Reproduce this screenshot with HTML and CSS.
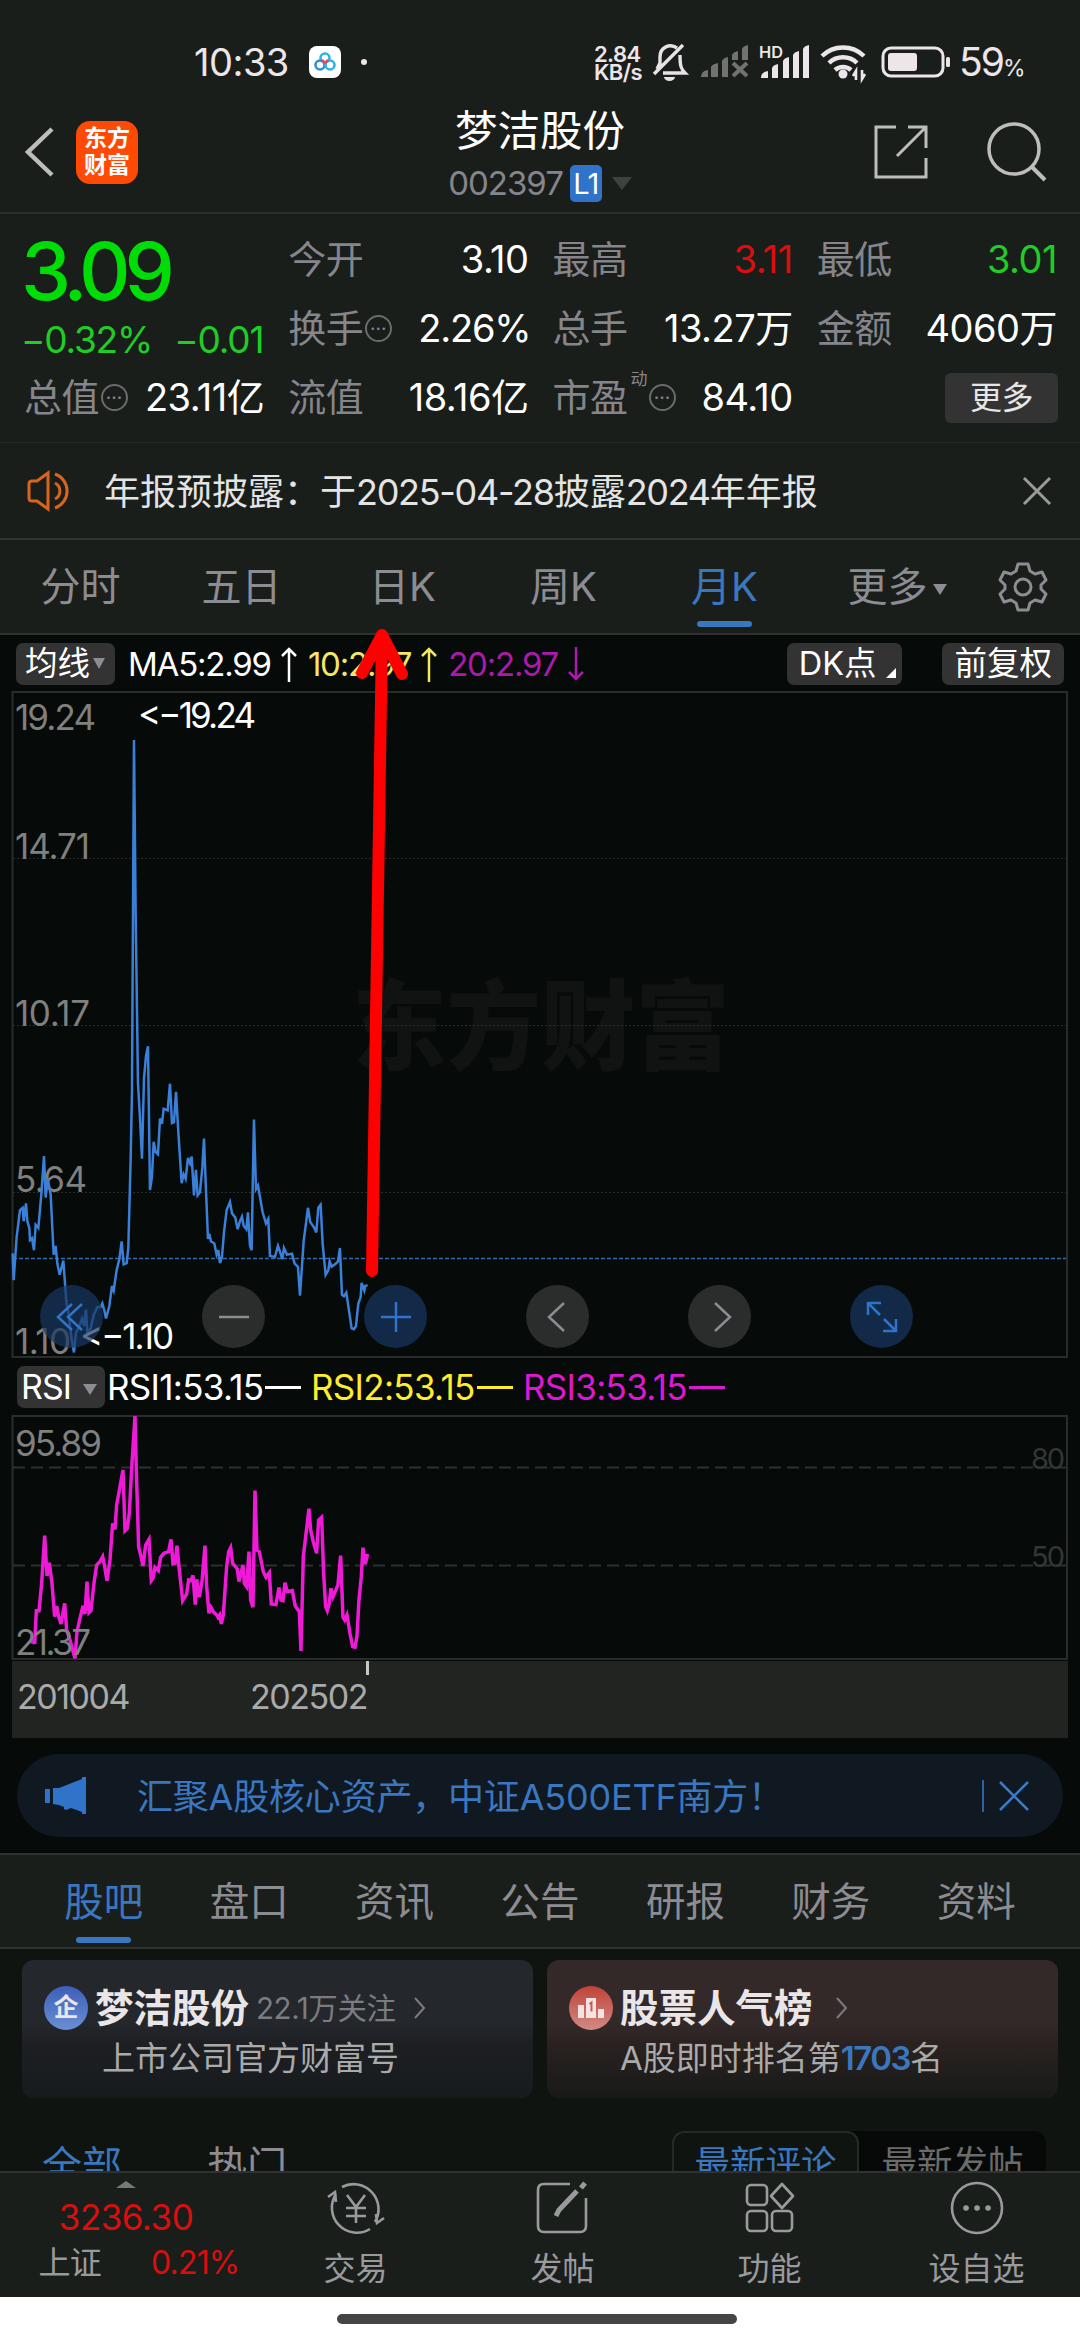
FILE: index.html
```html
<!DOCTYPE html>
<html lang="zh-CN">
<head>
    <meta charset="UTF-8">
    <meta name="viewport" content="width=device-width, initial-scale=1.0">
    <title>梦洁股份 002397</title>
    <link rel="stylesheet" href="styles.css">
</head>
<body>
    <div class="status-bar">
        <span class="time">10:33</span>
        <svg class="cloud-app" width="32" height="32" viewBox="0 0 32 32">
            <rect width="32" height="32" rx="8" fill="#fff"/>
            <g fill="none" stroke-width="2.6">
                <circle cx="16" cy="12" r="4.5" stroke="#2ab4e8"/>
                <circle cx="11" cy="19" r="4.5" stroke="#2b8ee0"/>
                <circle cx="21" cy="19" r="4.5" stroke="#2ab4e8"/>
                <path d="M13 14l3 3 3-3" stroke="#e8476a"/>
            </g>
        </svg>
        <span class="dot"></span>
        <div class="net-speed">2.84<br>KB/s</div>
        <svg class="bell" width="36" height="38" viewBox="0 0 36 38" fill="none" stroke="#e8e2e6" stroke-width="3.4">
            <path d="M25 5C18 0 8 4 8 14v6l-3 6M11 30h22c-4-4-5-7-5-18M31 2L2 31"/>
            <path d="M12 34h11a5.500 4 0 0 1-11 0z" fill="#e8e2e6" stroke="none"/>
        </svg>
        <svg class="signal-off" width="48" height="34" viewBox="0 0 48 34" fill="#71736f">
            <path d="M0 32q0-6 7-7v7zM10 22q1-3 7-4v14h-7zM21 16q1-3 6-4v20h-6zM31 10q1-3 6-4v9h-6zM41 4q1-3 6-4v15h-6z"/>
            <path d="M32 18l14 13M46 18L32 31" stroke="#71736f" stroke-width="4"/>
        </svg>
        <svg class="signal-hd" width="52" height="36" viewBox="0 0 52 36" fill="#ece6ea">
            <text class="hd" x="0" y="14" textLength="24" lengthAdjust="spacingAndGlyphs">HD</text>
            <path d="M2 34q0-6 7-7v7zM13 24q1-3 6-4v14h-6zM24 17q1-3 6-4v21h-6zM34 11q1-3 6-4v27h-6zM44 5q1-3 6-4v33h-6z"/>
        </svg>
        <svg class="wifi" width="47" height="36" viewBox="0 0 47 36" fill="none" stroke="#ece6ea" stroke-width="4.5">
            <path d="M2 12a30 30 0 0 1 42 0M9 19a20 20 0 0 1 28 0M15 26a12 12 0 0 1 16 0"/>
            <circle cx="23" cy="30" r="4.500" fill="#ece6ea" stroke="none"/>
            <path d="M36 36v-9l-3 5M42 26v9l3-5" stroke-width="2.600"/>
        </svg>
        <svg class="battery" width="70" height="32" viewBox="0 0 70 32">
            <rect x="2" y="2" width="60" height="28" rx="8" fill="none" stroke="#ece6ea" stroke-width="3"/>
            <rect x="7" y="7" width="29" height="18" rx="3" fill="#ece6ea"/>
            <rect x="65" y="11" width="4" height="10" rx="1.500" fill="#ece6ea"/>
        </svg>
        <span class="percent">59<small>%</small></span>
    </div>

    <div class="header">
        <div class="header-left">
            <svg width="28" height="50" viewBox="0 0 28 50" fill="none" stroke="#bdbdbd" stroke-width="4.500">
                <path d="M27 2L3 25l24 23"/>
            </svg>
            <div class="app-logo">东方<br>财富</div>
        </div>
        <div class="header-title">
            <div class="stock-name">梦洁股份</div>
            <div class="stock-code">002397<span class="level">L1</span><i class="tri"></i></div>
        </div>
        <div class="header-right">
            <svg width="54" height="54" viewBox="0 0 54 54" fill="none" stroke="#bdbdbd" stroke-width="3">
                <path d="M22 2H2v50h50V33M34 2h18v21M52 2L23 31"/>
            </svg>
            <svg width="60" height="60" viewBox="0 0 60 60" fill="none" stroke="#bdbdbd" stroke-width="3.500">
                <circle cx="27" cy="27" r="25"/>
                <path d="M45 45l13 13" stroke-width="4"/>
            </svg>
        </div>
    </div>

    <div class="quote">
        <div class="price-box">
            <div class="price">3.09</div>
            <div class="change"><span>−0.32%</span><span>−0.01</span></div>
        </div>
        <div class="cell"><label>今开</label><b>3.10</b></div>
        <div class="cell"><label>最高</label><b class="up">3.11</b></div>
        <div class="cell"><label>最低</label><b class="down">3.01</b></div>
        <div class="cell"><label>换手</label><i class="info">•••</i><b class="tight">2.26%</b></div>
        <div class="cell"><label>总手</label><b>13.27万</b></div>
        <div class="cell"><label>金额</label><b>4060万</b></div>
        <div class="cell"><label>总值</label><i class="info">•••</i><b>23.11亿</b></div>
        <div class="cell"><label>流值</label><b>18.16亿</b></div>
        <div class="cell"><label>市盈</label><sup>动</sup><i class="info">•••</i><b>84.10</b></div>
        <div class="cell"><span class="more-btn">更多</span></div>
    </div>

    <div class="notice">
        <svg width="48" height="42" viewBox="0 0 48 42" fill="none" stroke="#d9641c" stroke-width="3">
            <path d="M21 3v36L10 31H5q-3 0-3-3V14q0-3 3-3h5zM28 13a9 9 0 0 1 0 16M28 4a18 18 0 0 1 0 34"/>
        </svg>
        <span class="notice-text">年报预披露：于<em>2025-04-28</em>披露<em>2024</em>年年报</span>
        <svg width="28" height="28" viewBox="0 0 28 28" stroke="#9a9a9a" stroke-width="3">
            <path d="M1 1l26 26M27 1L1 27"/>
        </svg>
    </div>

    <div class="period-tabs">
        <span>分时</span>
        <span>五日</span>
        <span>日K</span>
        <span>周K</span>
        <span class="active">月K</span>
        <span class="more">更多<i class="tri"></i></span>
        <svg width="50" height="50" viewBox="0 0 50 50" fill="none" stroke="#8c8c92" stroke-width="3" stroke-linejoin="round">
            <path d="M20 2h10l2 7 5 3 7-2 4 8-5 5v4l5 5-4 8-7-2-5 3-2 7H20l-2-7-5-3-7 2-4-8 5-5v-4l-5-5 4-8 7 2 5-3z"/>
            <circle cx="25" cy="25" r="8"/>
        </svg>
    </div>

    <div class="ma-bar">
        <span class="chip ma-chip">均线<i class="tri"></i></span>
        <span class="ma5">MA5:2.99</span><svg class="arrow" width="18" height="36" viewBox="0 0 18 36" fill="none" stroke="#fff" stroke-width="2.5"><path d="M9 36V3M2 10l7-7 7 7"/></svg>
        <span class="ma10">10:2.97</span><svg class="arrow" width="18" height="36" viewBox="0 0 18 36" fill="none" stroke="#f5e663" stroke-width="2.5"><path d="M9 36V3M2 10l7-7 7 7"/></svg>
        <span class="ma20">20:2.97</span><svg class="arrow" width="18" height="36" viewBox="0 0 18 36" fill="none" stroke="#ab1aab" stroke-width="2.5"><path d="M9 1v32M2 26l7 7 7-7"/></svg>
        <span class="chip dk-chip">DK点<i class="corner"></i></span>
        <span class="chip">前复权</span>
    </div>

    <div class="chart">
        <svg width="1080" height="668" viewBox="0 0 1080 668">
            <text class="watermark" x="352" y="372" textLength="378" lengthAdjust="spacingAndGlyphs">东方财富</text>
            <rect x="12.5" y="2" width="1054.5" height="665" fill="none" stroke="#2a2c2b" stroke-width="2"/>
            <g stroke="#2b2d2c" stroke-dasharray="2 2">
                <path d="M13 168.5h1053M13 335.5h1053M13 502.5h1053"/>
            </g>
            <g class="axis">
                <text x="15" y="40" textLength="81">19.24</text>
                <text x="15" y="169" textLength="75">14.71</text>
                <text x="15" y="336" textLength="75">10.17</text>
                <text x="15" y="502" textLength="72">5.64</text>
                <text x="15" y="664" textLength="56">1.10</text>
            </g>
            <path d="M13 568.5h1053" stroke="#2f6bae" stroke-width="1.5" stroke-dasharray="4 2"/>
            <g transform="scale(.3333 .4464)">
                <polyline class="price-line" points="38,1262 41,1322 50,1225 60,1165 68,1160 71,1190 78,1150 82,1190 88,1205 90,1232 96,1228 102,1255 107,1198 115,1205 124,1130 132,1044 137,1137 143,1095 152,1130 161,1265 167,1245 172,1285 179,1310 190,1278 199,1370 206,1400 214,1450 222,1484 228,1440 238,1425 246,1408 252,1425 258,1388 262,1440 272,1430 281,1400 292,1382 302,1382 307,1374 313,1390 318,1408 328,1380 336,1335 341,1345 350,1300 358,1275 365,1235 371,1287 380,1284 385,1250 392,1050 396,900 402,112 407,500 414,880 420,960 426,1050 432,870 438,820 444,798 450,1120 456,1090 461,1012 467,1035 474,1040 480,960 486,972 491,938 503,942 510,882 516,970 522,968 528,900 535,990 545,1105 551,1085 557,1095 564,1048 570,1060 575,1045 582,1132 588,1075 593,1132 600,1125 607,1070 612,1005 618,1120 624,1230 628,1218 633,1235 643,1240 650,1265 655,1255 660,1284 666,1270 672,1215 680,1165 690,1147 696,1172 706,1182 713,1208 720,1190 726,1180 731,1200 739,1208 744,1170 750,1245 755,1255 758,1120 762,962 768,1118 774,1110 788,1170 798,1195 805,1185 810,1268 825,1270 834,1245 840,1258 847,1275 852,1250 861,1265 876,1263 884,1285 894,1292 900,1357 911,1235 918,1195 924,1160 931,1192 943,1205 949,1215 955,1160 962,1153 968,1240 977,1310 985,1300 989,1280 995,1292 1008,1285 1014,1280 1020,1250 1026,1355 1032,1358 1039,1350 1055,1430 1062,1432 1068,1425 1075,1375 1082,1360 1085,1328 1093,1345 1096,1335 1103,1333"/>
            </g>
            <g class="peak">
                <text x="138" y="38" textLength="118">&lt;−19.24</text>
                <text x="80" y="659" textLength="94">&lt;−1.10</text>
            </g>
        </svg>
        <div class="chart-tools">
            <span class="tool blue"><svg width="30" height="30" viewBox="0 0 30 30"><path d="M15 2L1 15l14 13M25 2L11 15l14 13"/></svg></span>
            <span class="tool"><svg width="32" height="32" viewBox="0 0 32 32"><path d="M1 16h30"/></svg></span>
            <span class="tool blue"><svg width="32" height="32" viewBox="0 0 32 32"><path d="M1 16h30M16 1v30"/></svg></span>
            <span class="tool"><svg width="30" height="30" viewBox="0 0 30 30"><path d="M21 1L6 15l15 14"/></svg></span>
            <span class="tool"><svg width="30" height="30" viewBox="0 0 30 30"><path d="M10 1l15 14-15 14"/></svg></span>
            <span class="tool blue"><svg width="34" height="34" viewBox="0 0 34 34"><path d="M3 15V3h13M3 3l12 12M31 19v12H18M31 31L19 19"/></svg></span>
        </div>
    </div>

    <div class="rsi-bar">
        <span class="chip rsi-chip">RSI<i class="tri"></i></span>
        <span class="rsi rsi1">RSI1:53.15<i></i></span>
        <span class="rsi rsi2">RSI2:53.15<i></i></span>
        <span class="rsi rsi3">RSI3:53.15<i></i></span>
    </div>

    <svg class="rsi-chart" width="1080" height="246" viewBox="0 0 1080 246">
        <rect x="12.5" y="1" width="1054.5" height="243" fill="none" stroke="#2a2d2b" stroke-width="2"/>
        <path d="M13 52.5h1053M13 150.5h1053" stroke="#2d302e" stroke-width="2" stroke-dasharray="12 6"/>
        <g class="level-text">
            <text x="1031" y="54" textLength="34">80</text>
            <text x="1031" y="152" textLength="34">50</text>
        </g>
        <g transform="translate(0 -45) scale(.3333)">
            <polyline class="rsi-line" points="93,820 97,802 104,822 109,722 117,722 125,640 134,497 141,618 148,578 156,640 164,740 170,708 176,740 183,762 194,700 200,780 210,810 218,840 225,865 231,785 240,745 249,708 255,732 261,635 267,728 273,722 282,640 290,585 300,575 308,560 314,590 321,632 330,570 338,460 345,478 350,405 360,350 369,300 375,482 382,475 388,430 396,280 405,138 409,300 416,530 422,555 429,588 437,525 447,508 454,632 459,625 465,592 475,602 482,562 492,550 506,545 513,508 519,582 525,580 531,527 537,590 548,692 560,672 566,630 573,632 579,616 586,704 590,628 598,682 606,635 615,527 620,650 627,730 633,712 640,725 650,735 654,742 659,735 664,762 670,735 680,590 686,545 692,533 698,580 712,597 717,635 729,585 733,640 740,650 747,545 752,690 759,712 765,362 771,540 778,545 790,605 798,622 808,608 814,702 828,704 837,653 843,690 849,692 855,638 862,665 877,662 886,708 898,725 903,843 910,560 916,510 927,416 932,480 941,520 950,550 956,450 965,442 971,610 977,710 982,722 988,700 993,655 999,680 1014,645 1022,557 1029,742 1034,750 1041,735 1050,790 1058,830 1065,832 1071,800 1077,690 1084,620 1089,533 1096,582 1103,552"/>
        </g>
        <g class="axis">
            <text x="15" y="41" textLength="87">95.89</text>
            <text x="15" y="240" textLength="76">21.37</text>
        </g>
    </svg>

    <div class="dates"><span>201004</span><span class="last">202502</span></div>

    <div class="banner">
        <svg width="42" height="38" viewBox="0 0 42 38" fill="#2f74c8">
            <path d="M0 12h5v14H0zM8 11h6L37 2V0h4v37h-4v-2l-11-4-5 2-2-1v-2l-5-2-6-1z"/>
        </svg>
        <span class="banner-text">汇聚A股核心资产，中证A500ETF南方！</span>
        <svg class="banner-close" width="48" height="34" viewBox="0 0 48 34" stroke="#3a7bc8" fill="none">
            <path d="M1 1v32" stroke-width="1.5"/>
            <path d="M18 3l28 28M46 3L18 31" stroke-width="2.5"/>
        </svg>
    </div>

    <div class="sub-tabs">
        <span class="active">股吧</span>
        <span>盘口</span>
        <span>资讯</span>
        <span>公告</span>
        <span>研报</span>
        <span>财务</span>
        <span>资料</span>
    </div>

    <div class="content">
        <div class="cards">
            <div class="card card-blue">
                <div class="card-title">
                    <span class="badge">企</span>
                    <strong>梦洁股份</strong>
                    <small>22.1万关注</small>
                    <svg width="12" height="22" viewBox="0 0 12 22"><path d="M1 1l9 10-9 10"/></svg>
                </div>
                <div class="card-sub">上市公司官方财富号</div>
            </div>
            <div class="card card-red">
                <div class="card-title">
                    <svg class="rank" width="44" height="44" viewBox="0 0 44 44">
                        <circle cx="22" cy="22" r="22" fill="url(#rankRed)"/>
                        <path d="M9 19h6v13H9zM17 12h10v20H17zM29 23h6v9h-6z" fill="#f3e3e1"/>
                        <path d="M20.500 18l2-1.500v9" fill="none" stroke="#c95a52" stroke-width="2"/>
                        <defs>
                            <linearGradient id="rankRed" x1="0" y1="0" x2="0" y2="1">
                                <stop offset="0" stop-color="#c04338"/>
                                <stop offset="1" stop-color="#d08a85"/>
                            </linearGradient>
                        </defs>
                    </svg>
                    <strong>股票人气榜</strong>
                    <svg class="go" width="12" height="22" viewBox="0 0 12 22"><path d="M1 1l9 10-9 10"/></svg>
                </div>
                <div class="card-sub">A股即时排名第<b>1703</b>名</div>
            </div>
        </div>
        <div class="feed-tabs">
            <span class="feed active">全部</span>
            <span class="feed">热门</span>
            <div class="sort">
                <span class="on">最新评论</span>
                <span>最新发帖</span>
            </div>
        </div>
    </div>

    <div class="bottom-bar">
        <div class="index">
            <i class="tri-up"></i>
            <div class="index-value">3236.30</div>
            <div class="index-row"><span>上证</span><b>0.21%</b></div>
        </div>
        <div class="nav">
            <svg width="62" height="56" viewBox="0 0 62 56">
                <path d="M17 7a25 25 0 0 1 33 35M45 49A25 25 0 0 1 11 14M3 17l7-5 1 10M59 38l-7 5-1-9"/>
                <path d="M22 15l9 12 9-12M31 27v16M21 28h20M21 36h20"/>
            </svg>
            <span>交易</span>
        </div>
        <div class="nav">
            <svg width="62" height="56" viewBox="0 0 62 56">
                <path d="M38 4H12q-6 0-6 6v36q0 6 6 6h36q6 0 6-6V18"/>
                <path d="M24 36l3-6 18-19" stroke-width="5"/>
                <path d="M49 8l4-5" stroke-width="5"/>
            </svg>
            <span>发帖</span>
        </div>
        <div class="nav">
            <svg width="62" height="56" viewBox="0 0 62 56">
                <rect x="8" y="5" width="20" height="20" rx="4"/>
                <rect x="8" y="31" width="20" height="20" rx="4"/>
                <rect x="33" y="31" width="20" height="20" rx="4"/>
                <path d="M43 4l11 12-11 12-11-12z" stroke-linejoin="round"/>
            </svg>
            <span>功能</span>
        </div>
        <div class="nav">
            <svg width="62" height="56" viewBox="0 0 62 56">
                <circle cx="31" cy="28" r="25"/>
                <path d="M20 28h.1M31 28h.1M42 28h.1" stroke-width="5.500" stroke-linecap="round"/>
            </svg>
            <span>设自选</span>
        </div>
    </div>

    <div class="home-bar"><i></i></div>

    <!-- hand-drawn pointer over the chart -->
    <svg class="pointer" width="70" height="670" viewBox="0 0 70 670">
        <path d="M22 651L32 15M12 53l20-38 20 39"/>
    </svg>
</body>
</html>
```
FILE: styles.css
```css
* {
    box-sizing: border-box;
}

body {
    margin: 0;
    width: 1080px;
    height: 2340px;
    overflow: hidden;
    position: relative;
    font-family: Inter, "Noto Sans CJK SC", sans-serif;
    letter-spacing: 0;
    background-color: #060a08;
    color: #ffffff;
}

i,
em {
    font-style: normal;
}

svg {
    display: block;
    flex: none;
    overflow: visible;
}

.tri {
    display: inline-block;
    border: 7px solid transparent;
    border-top: 11px solid #8c8c92;
    border-bottom: none;
}

/* status bar */
.status-bar {
    height: 100px;
    padding: 24px 0 0 194px;
    display: flex;
    align-items: center;
    background-color: #1a1e1b;
    color: #ece6ea;
}

.time {
    width: 115px;
    font-size: 38px;
    letter-spacing: -0.5px;
    line-height: 40px;
}

.dot {
    width: 6px;
    height: 6px;
    margin-left: 20px;
    border-radius: 50%;
    background-color: #ece6ea;
}

.net-speed {
    width: 50px;
    margin-left: 227px;
    padding-top: 2px;
    font-size: 22px;
    font-weight: 600;
    line-height: 18px;
    letter-spacing: -0.6px;
}

.bell {
    margin-left: 8px;
}

.signal-off {
    margin-left: 13px;
}

.signal-hd {
    margin-left: 10px;
}

.hd {
    font-size: 16px;
    font-weight: 600;
}

.wifi {
    margin-left: 9px;
}

.battery {
    margin-left: 14px;
}

.percent {
    margin-left: 8px;
    padding-top: 5px;
    font-size: 39px;
    letter-spacing: -2px;
    line-height: 40px;
    white-space: nowrap;
}

.percent small {
    font-size: 23px;
}

/* header */
.header {
    height: 114px;
    padding: 0 33px 0 25px;
    display: flex;
    justify-content: space-between;
    border-bottom: 2px solid #2c2f2d;
    background-color: #1a1e1b;
}

.header-left,
.header-right {
    width: 190px;
    height: 104px;
    display: flex;
    align-items: center;
}

.header-left {
    gap: 23px;
}

.header-right {
    justify-content: flex-end;
    gap: 59px;
}

.app-logo {
    width: 62px;
    height: 63px;
    padding-top: 4px;
    border-radius: 14px;
    background-color: #ff4a06;
    font-size: 23px;
    font-weight: 700;
    line-height: 27px;
    text-align: center;
}

.header-title {
    padding: 7px 0 0 8px;
    text-align: center;
}

.stock-name {
    font-size: 42.500px;
    line-height: 48px;
}

.stock-code {
    display: flex;
    align-items: center;
    justify-content: center;
    font-size: 33px;
    line-height: 56px;
    letter-spacing: -1px;
    color: #85858b;
}

.level {
    width: 32px;
    height: 37px;
    margin: 0 10px 0 7px;
    border-radius: 5px;
    background-color: #2f74c8;
    color: #ffffff;
    font-size: 29px;
    line-height: 37px;
}

.stock-code .tri {
    border-width: 13px 10px 0;
    border-top-color: #3f4140;
}

/* quote */
.quote {
    height: 229px;
    padding: 11px 24px 0;
    display: grid;
    grid-template-columns: repeat(4, 1fr);
    grid-template-rows: repeat(3, 69px);
    column-gap: 25px;
    border-bottom: 1px solid #262a27;
    background-color: #1a1e1b;
}

.price-box {
    grid-row: span 2;
    margin-left: -3px;
    color: #00dc05;
}

.price {
    padding-top: 8px;
    font-size: 80px;
    font-weight: 500;
    line-height: 76px;
    letter-spacing: -6.200px;
}

.change {
    display: flex;
    justify-content: space-between;
    font-size: 37px;
    line-height: 62px;
    letter-spacing: -1.200px;
    color: #1fcd26;
}

.cell {
    display: flex;
    align-items: center;
    font-size: 38px;
    line-height: 69px;
    letter-spacing: -0.5px;
    white-space: nowrap;
}

.cell label {
    color: #85858b;
}

.cell b {
    margin-left: auto;
    margin-right: -1px;
    font-weight: 400;
}

.cell .tight {
    letter-spacing: -1.200px;
    margin-right: -3px;
}

.cell sup {
    align-self: flex-start;
    margin-left: 3px;
    font-size: 17px;
    line-height: 32px;
    color: #85858b;
}

.cell .up {
    color: #d90f0f;
}

.cell .down {
    color: #1fcd26;
}

.info {
    width: 27px;
    height: 27px;
    margin-left: 2px;
    border: 2px solid #6a6b6d;
    border-radius: 50%;
    color: #85858b;
    font-size: 8px;
    line-height: 23px;
    letter-spacing: 1px;
    text-align: center;
}

.more-btn {
    width: 113px;
    height: 50px;
    margin-left: auto;
    margin-right: -2px;
    border-radius: 6px;
    background-color: #333334;
    color: #e6e6e6;
    font-size: 32px;
    line-height: 50px;
    text-align: center;
}

/* notice */
.notice {
    height: 97px;
    padding: 0 29px 0 27px;
    display: flex;
    align-items: center;
    border-bottom: 2px solid #2f3230;
    background-color: #1a1e1b;
}

.notice-text {
    flex: 1;
    padding: 0 0 4px 29px;
    font-size: 36px;
    color: #e4e4e4;
}

.notice-text em {
    letter-spacing: -1.300px;
}

/* period tabs */
.period-tabs {
    height: 95px;
    padding-right: 32px;
    display: flex;
    align-items: center;
    border-bottom: 2px solid #2f3230;
    background-color: #1a1e1b;
    color: #8c8c92;
    font-size: 40px;
}

.period-tabs span {
    width: 161px;
    height: 93px;
    line-height: 93px;
    text-align: center;
}

.period-tabs .more {
    width: 193px;
    padding-right: 9px;
}

.period-tabs .tri {
    margin: 0 0 6px 5px;
}

.active {
    color: #3a77bf;
    display: flex;
    flex-direction: column;
    align-items: center;
}

.period-tabs .active::after,
.sub-tabs .active::after {
    content: "";
    flex: none;
    width: 55px;
    height: 6px;
    margin-top: -12px;
    border-radius: 3px;
    background-color: #3a77bf;
}

/* moving average bar */
.ma-bar {
    height: 55px;
    padding: 2px 16px 0;
    display: flex;
    align-items: center;
    font-size: 33px;
}

.chip {
    height: 42px;
    padding: 0 12px;
    border-radius: 7px;
    background-color: #333334;
    font-size: 32.500px;
    line-height: 42px;
    white-space: nowrap;
}

.ma-chip {
    width: 99px;
    padding: 0 0 0 9px;
    margin-right: 13px;
}

.ma-chip .tri {
    margin: 0 0 6px 3px;
    border-left-width: 6px;
    border-right-width: 6px;
}

.ma5,
.ma10,
.ma20 {
    letter-spacing: -1.200px;
}

.ma10 {
    color: #f5e663;
}

.ma20 {
    color: #ab1aab;
}

.arrow {
    margin: 0 10px 0 9px;
}

.dk-chip {
    display: flex;
    margin-left: auto;
    margin-right: 40px;
    padding-right: 6px;
}

.corner {
    align-self: flex-end;
    margin: 0 0 7px 10px;
    border: 5px solid #ffffff;
    border-top-color: transparent;
    border-left-color: transparent;
}

/* price chart */
.chart {
    height: 668px;
    position: relative;
}

.axis {
    font-size: 35px;
    fill: #7f807f;
}

.peak {
    font-size: 35px;
    fill: #ffffff;
}

.watermark {
    font-size: 98px;
    font-weight: 900;
    fill: #101311;
}

.price-line {
    fill: none;
    stroke: #3a80d8;
    stroke-width: 2.500px;
    vector-effect: non-scaling-stroke;
}

.chart-tools {
    position: absolute;
    left: 40px;
    bottom: 10px;
    display: flex;
    gap: 99px;
}

.tool {
    width: 63px;
    height: 63px;
    display: flex;
    align-items: center;
    justify-content: center;
    border-radius: 50%;
    background-color: rgba(56, 56, 56, 0.75);
}

.tool path {
    fill: none;
    stroke: #8c8c92;
    stroke-width: 2.500;
}

.blue {
    background-color: rgba(24, 56, 98, 0.7);
}

.blue path {
    stroke: #2f74c8;
}

/* rsi */
.rsi-bar {
    height: 57px;
    padding: 1px 17px 0;
    display: flex;
    align-items: center;
    font-size: 35px;
}

.rsi-chip {
    width: 88px;
    padding: 0 0 0 4px;
    margin-right: 2px;
    font-size: 34px;
    letter-spacing: -1px;
}

.rsi-chip .tri {
    margin: 0 0 4px 12px;
}

.rsi {
    display: flex;
    align-items: center;
    letter-spacing: -0.700px;
    white-space: nowrap;
}

.rsi i {
    width: 36px;
    height: 3px;
    margin-left: 2px;
    background-color: currentColor;
}

.rsi1 {
    width: 204px;
}

.rsi2 {
    width: 212px;
    color: #ffec2e;
}

.rsi3 {
    color: #dd18d3;
}

.level-text {
    font-size: 29px;
    fill: #333635;
}

.rsi-line {
    fill: none;
    stroke: #ee1ad8;
    stroke-width: 3.500px;
    vector-effect: non-scaling-stroke;
}

.dates {
    width: 1056px;
    height: 77px;
    margin: 0 auto;
    padding-left: 5px;
    display: flex;
    gap: 107px;
    background-color: #222422;
    color: #aaaaaa;
    font-size: 34px;
    letter-spacing: -1.500px;
    line-height: 72px;
}

.last {
    width: 133px;
    padding-right: 2px;
    text-align: right;
    background: linear-gradient(#c8c8c8, #c8c8c8) right top / 3px 14px no-repeat;
}

/* banner */
.banner {
    height: 83px;
    margin: 16px 17px;
    padding: 0 33px 0 28px;
    display: flex;
    align-items: center;
    border-radius: 42px;
    background-color: #101821;
    color: #3a77bf;
    font-size: 36px;
}

.banner-text {
    flex: 1;
    padding: 0 0 3px 50px;
    letter-spacing: -0.200px;
}

/* sub tabs */
.sub-tabs {
    height: 96px;
    padding: 0 31px;
    display: flex;
    border-top: 2px solid #2f3230;
    border-bottom: 2px solid #2f3230;
    background-color: #1a1e1b;
    color: #8c8c92;
    font-size: 39.500px;
    line-height: 94px;
}

.sub-tabs span {
    flex: 1;
    text-align: center;
}

/* content */
.content {
    height: 222px;
    padding: 11px 22px 0;
    overflow: hidden;
    background-color: #101411;
}

.cards {
    display: flex;
    gap: 14px;
}

.card {
    flex: 1;
    height: 138px;
    padding: 22px 22px 0;
    border-radius: 12px;
}

.card-blue {
    background: linear-gradient(#24272c 45%, #1d1f23 60%, #161b1e);
}

.card-red {
    background: linear-gradient(#342929 45%, #2a2221 60%, #181a18);
}

.card-title {
    height: 52px;
    display: flex;
    align-items: center;
    color: #eae6e8;
}

.card-title strong {
    margin-left: 7px;
    font-size: 38.500px;
    font-weight: 600;
    line-height: 52px;
}

.card-title small {
    margin: 0 18px 0 7px;
    font-size: 29.500px;
    letter-spacing: -0.400px;
    line-height: 50px;
    color: #7b7b80;
}

.card-title path {
    stroke-width: 2;
}

.card-title svg:not(.rank) path {
    fill: none;
    stroke: #7b7b80;
}

.go {
    margin-left: 23px;
}

.badge {
    width: 44px;
    height: 44px;
    border-radius: 50%;
    background: linear-gradient(#3c5fb8, #6a8fd4);
    font-size: 25px;
    font-weight: 700;
    line-height: 43px;
    text-align: center;
}

.card-sub {
    padding-left: 58px;
    font-size: 33px;
    line-height: 48px;
    color: #aaaaaa;
}

.card-red .card-sub {
    padding-left: 51px;
}

.card-sub b {
    color: #3a77bf;
    font-weight: 600;
    letter-spacing: -1.500px;
}

.feed-tabs {
    margin-top: 33px;
    display: flex;
    color: #8c8c92;
}

.feed {
    width: 165px;
    padding-left: 20px;
    font-size: 40px;
    line-height: 70px;
    display: block;
}

.feed.active {
    color: #3a77bf;
}

.sort {
    height: 68px;
    margin-left: auto;
    margin-right: 12px;
    display: flex;
    border-radius: 12px;
    background-color: #060907;
    color: #6a6b6a;
    font-size: 35.500px;
    line-height: 66px;
}

.sort span {
    width: 187px;
    text-align: center;
}

.sort .on {
    border: 2px solid #262a27;
    border-radius: 12px;
    background-color: #101411;
    color: #3a77bf;
    line-height: 62px;
}

/* bottom bar */
.bottom-bar {
    height: 126px;
    display: flex;
    border-top: 2px solid #2f3230;
    background-color: #1a1e1b;
    color: #9a9a9e;
}

.index {
    width: 252px;
    padding-top: 8px;
    display: flex;
    flex-direction: column;
    align-items: center;
    color: #d90f0f;
}

.tri-up {
    border: 10px solid transparent;
    border-top: none;
    border-bottom: 7px solid #77787a;
}

.index-value {
    font-size: 35px;
    line-height: 58px;
    letter-spacing: -0.5px;
}

.index-row {
    display: flex;
    gap: 50px;
    margin-left: 26px;
    font-size: 32px;
    line-height: 34px;
    letter-spacing: -0.8px;
}

.index-row span {
    color: #9a9a9e;
}

.index-row b {
    font-weight: 400;
}

.nav {
    width: 207px;
    padding-top: 7px;
    display: flex;
    flex-direction: column;
    align-items: center;
    font-size: 32px;
    line-height: 66px;
}

.nav path,
.nav rect,
.nav circle {
    fill: none;
    stroke: #9a9a9e;
}

.nav svg {
    stroke-width: 2.600;
}

.home-bar {
    height: 44px;
    padding-top: 17px;
    background-color: #ffffff;
}

.home-bar i {
    display: block;
    width: 400px;
    height: 10px;
    margin: 0 auto 0 337px;
    border-radius: 5px;
    background-color: #444643;
}

.pointer {
    position: absolute;
    left: 350px;
    top: 620px;
    fill: none;
    stroke: #ff0000;
    stroke-width: 12;
    stroke-linecap: round;
    stroke-linejoin: round;
}
```
